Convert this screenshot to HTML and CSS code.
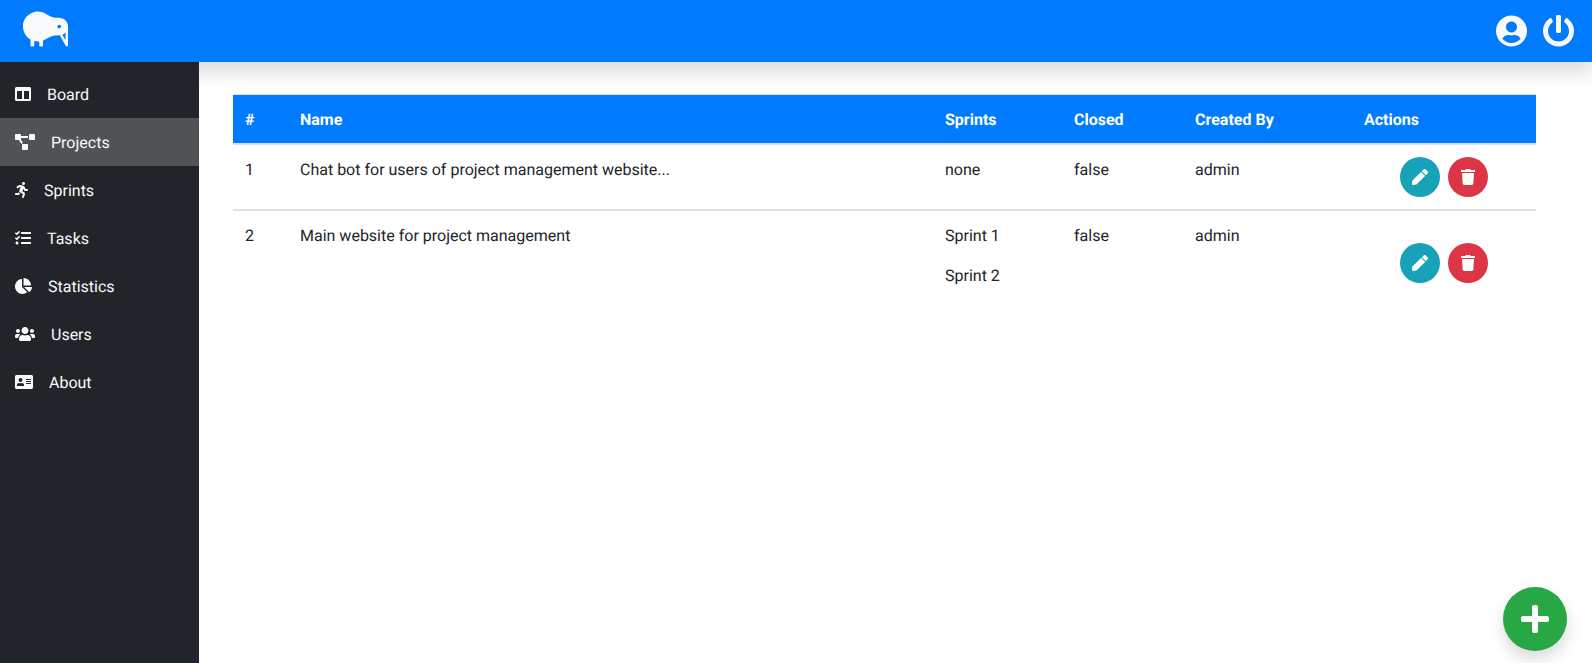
FILE: index.html
```html
<!DOCTYPE html>
<html lang="en">
<head>
    <meta charset="UTF-8">
    <meta name="viewport" content="width=device-width, initial-scale=1.0">
    <title>Projects</title>
    <link rel="stylesheet" href="styles.css">
</head>
<body>

    <!-- Top bar -->
    <header class="navbar">
        <svg class="logo" viewBox="0 0 576 512"><path d="M575.81 217.98C572.64 157.41 518.28 112 457.63 112h-9.37c-52.82 0-104.25-16.25-147.74-46.24-41.99-28.96-96.04-41.62-153.21-28.7C129.3 41.12-.08 78.24 0 224c.04 70.95 38.68 132.8 95.99 166.01V464c0 8.84 7.16 16 16 16h16c8.84 0 16-7.16 16-16v-54.26c15.36 3.96 31.4 6.26 48 6.26 5.44 0 10.68-.73 16-1.18V464c0 8.84 7.16 16 16 16h16c8.84 0 16-7.16 16-16v-59.43c14.24-5.06 27.88-11.39 40.34-19.51C342.07 355.25 393.86 336 448.46 336c25.48 0 16.01-.31 23.05-.78l74.41 136.44c2.86 5.23 8.3 8.34 14.05 8.34 1.31 0 2.64-.16 3.95-.5 7.09-1.8 12.05-8.19 12.05-15.5 0 0 .14-240.24-.16-246.02zM463.97 248c-13.25 0-24-10.75-24-24 0-13.26 10.75-24 24-24s24 10.74 24 24c0 13.25-10.75 24-24 24zm80 153.25l-39.86-73.08c15.12-5.83 28.73-14.6 39.86-25.98v99.06z"/></svg>
        <div class="navbar-right">
            <svg class="nav-icon" viewBox="0 0 496 512"><path d="M248 8C111 8 0 119 0 256s111 248 248 248 248-111 248-248S385 8 248 8zm0 96c48.6 0 88 39.4 88 88s-39.4 88-88 88-88-39.4-88-88 39.4-88 88-88zm0 344c-58.7 0-111.3-26.6-146.5-68.2 18.8-35.4 55.6-59.8 98.5-59.8 2.4 0 4.8.4 7.1 1.1 13 4.2 26.6 6.9 40.9 6.9 14.3 0 28-2.7 40.9-6.9 2.3-.7 4.7-1.1 7.1-1.1 42.9 0 79.7 24.4 98.5 59.8C359.3 421.4 306.7 448 248 448z"/></svg>
            <svg class="nav-icon" viewBox="8 0 496 512"><path d="M400 54.1c63 45 104 118.6 104 201.9 0 136.8-110.8 247.7-247.5 248C120 504.3 8.2 393 8 256.4 7.9 173.1 48.9 99.3 111.8 54.2c11.7-8.3 28-4.8 35 7.7L162.6 90c5.9 10.5 3.1 23.8-6.6 31-41.5 30.8-68 79.6-68 134.9-.1 92.3 74.5 168.1 168 168.1 91.6 0 168.6-74.2 168-169.1-.3-51.8-24.7-101.8-68.1-134-9.7-7.2-12.4-20.5-6.5-30.9l15.8-28.1c7-12.4 23.2-16.1 34.8-7.8zM296 264V24c0-13.3-10.7-24-24-24h-32c-13.3 0-24 10.7-24 24v240c0 13.3 10.7 24 24 24h32c13.3 0 24-10.7 24-24z"/></svg>
        </div>
    </header>

    <div class="layout">
        <!-- Side menu -->
        <nav class="sidebar">
            <a class="side-link">
                <svg class="side-icon" viewBox="0 0 512 512"><path d="M464 32H48C21.49 32 0 53.49 0 80v352c0 26.51 21.49 48 48 48h416c26.51 0 48-21.49 48-48V80c0-26.51-21.49-48-48-48zM224 416H64V160h160v256zm224 0H288V160h160v256z"/></svg>
                <span class="side-label">Board</span>
            </a>
            <a class="side-link active">
                <svg class="side-icon" viewBox="0 0 640 512"><path d="M384 320H256c-17.67 0-32 14.33-32 32v128c0 17.67 14.33 32 32 32h128c17.67 0 32-14.33 32-32V352c0-17.67-14.33-32-32-32zM192 32c0-17.67-14.33-32-32-32H32C14.33 0 0 14.33 0 32v128c0 17.67 14.33 32 32 32h95.72l73.16 128.04C211.98 300.98 232.4 288 256 288h.28L192 175.51V128h224V64H192V32zM608 0H480c-17.67 0-32 14.33-32 32v128c0 17.67 14.33 32 32 32h128c17.67 0 32-14.33 32-32V32c0-17.67-14.33-32-32-32z"/></svg>
                <span class="side-label">Projects</span>
            </a>
            <a class="side-link">
                <svg class="side-icon" viewBox="0 0 416 512"><path d="M272 96c26.51 0 48-21.49 48-48S298.51 0 272 0s-48 21.49-48 48 21.49 48 48 48zM113.69 317.47l-14.8 34.52H32c-17.67 0-32 14.33-32 32s14.33 32 32 32h77.45c19.25 0 36.58-11.44 44.11-29.09l8.79-20.52-10.67-6.3c-17.32-10.23-30.06-25.37-37.99-42.61zM384 223.99h-44.03l-26.06-53.25c-12.5-25.55-35.45-44.23-61.78-50.94l-71.08-21.14c-28.3-6.8-57.77-.55-80.84 17.14l-39.67 30.41c-14.03 10.75-16.69 30.83-5.92 44.86s30.84 16.66 44.86 5.92l39.69-30.41c7.67-5.89 17.44-8 25.27-6.14l14.7 4.37-37.46 87.39c-12.62 29.48-1.31 64.01 26.3 80.31l84.98 50.17-27.47 87.73c-5.28 16.86 4.11 34.81 20.97 40.09 3.19 1 6.41 1.48 9.58 1.48 13.61 0 26.23-8.77 30.52-22.45l31.64-101.06c5.91-20.77-2.89-43.08-21.64-54.39l-61.24-36.14 31.31-78.28 20.27 41.43c8 16.34 24.92 26.89 43.11 26.89H384c17.67 0 32-14.33 32-32s-14.33-31.99-32-31.99z"/></svg>
                <span class="side-label">Sprints</span>
            </a>
            <a class="side-link">
                <svg class="side-icon" viewBox="0 0 512 512"><path d="M139.61 35.5a12 12 0 0 0-17 0L58.93 98.81l-22.7-22.12a12 12 0 0 0-17 0L3.53 92.41a12 12 0 0 0 0 17l47.59 47.4a12.78 12.78 0 0 0 17.61 0l15.59-15.62L156.52 69a12.09 12.09 0 0 0 .09-17zm0 159.19a12 12 0 0 0-17 0l-63.68 63.72-22.7-22.1a12 12 0 0 0-17 0L3.53 252a12 12 0 0 0 0 17L51 316.5a12.77 12.77 0 0 0 17.6 0l15.7-15.69 72.2-72.22a12 12 0 0 0 .09-16.9zM64 368c-26.49 0-48.59 21.5-48.59 48S37.53 464 64 464a48 48 0 0 0 0-96zm432 16H208a16 16 0 0 0-16 16v32a16 16 0 0 0 16 16h288a16 16 0 0 0 16-16v-32a16 16 0 0 0-16-16zm0-320H208a16 16 0 0 0-16 16v32a16 16 0 0 0 16 16h288a16 16 0 0 0 16-16V80a16 16 0 0 0-16-16zm0 160H208a16 16 0 0 0-16 16v32a16 16 0 0 0 16 16h288a16 16 0 0 0 16-16v-32a16 16 0 0 0-16-16z"/></svg>
                <span class="side-label">Tasks</span>
            </a>
            <a class="side-link">
                <svg class="side-icon" viewBox="0 0 544 512"><path d="M527.79 288H290.5l158.03 158.03c6.04 6.04 15.98 6.53 22.19.68 38.7-36.46 65.32-85.61 73.13-140.86 1.34-9.46-6.51-17.85-16.06-17.85zm-15.83-64.8C503.72 103.74 408.26 8.28 288.8.04 279.68-.59 272 7.1 272 16.24V240h223.77c9.14 0 16.82-7.68 16.19-16.8zM224 288V50.71c0-9.55-8.39-17.4-17.84-16.06C86.99 51.49-4.1 155.6.14 280.37 4.5 408.51 114.83 513.59 243.03 511.98c50.4-.63 96.97-16.87 135.26-44.03 7.9-5.6 8.42-17.23 1.57-24.08L224 288z"/></svg>
                <span class="side-label">Statistics</span>
            </a>
            <a class="side-link">
                <svg class="side-icon" viewBox="0 0 640 512"><path d="M96 224c35.3 0 64-28.7 64-64s-28.7-64-64-64-64 28.7-64 64 28.7 64 64 64zm448 0c35.3 0 64-28.7 64-64s-28.7-64-64-64-64 28.7-64 64 28.7 64 64 64zm32 32h-64c-17.6 0-33.5 7.1-45.1 18.6 40.3 22.1 68.9 62 75.1 109.4h66c17.7 0 32-14.3 32-32v-32c0-35.3-28.7-64-64-64zm-256 0c61.9 0 112-50.1 112-112S381.9 32 320 32 208 82.1 208 144s50.1 112 112 112zm76.8 32h-8.3c-20.8 10-43.9 16-68.5 16s-47.6-6-68.5-16h-8.3C179.6 288 128 339.6 128 403.2V432c0 26.5 21.5 48 48 48h288c26.5 0 48-21.5 48-48v-28.8c0-63.6-51.6-115.2-115.2-115.2zm-223.7-13.4C161.5 263.1 145.6 256 128 256H64c-35.3 0-64 28.7-64 64v32c0 17.7 14.3 32 32 32h65.9c6.3-47.4 34.9-87.3 75.2-109.4z"/></svg>
                <span class="side-label">Users</span>
            </a>
            <a class="side-link">
                <svg class="side-icon" viewBox="0 0 576 512"><path d="M528 32H48C21.5 32 0 53.5 0 80v352c0 26.5 21.5 48 48 48h480c26.5 0 48-21.5 48-48V80c0-26.5-21.5-48-48-48zm-352 96c35.3 0 64 28.7 64 64s-28.7 64-64 64-64-28.7-64-64 28.7-64 64-64zm112 236.8c0 10.6-10 19.2-22.4 19.2H86.4C74 384 64 375.4 64 364.8v-19.2c0-31.8 30.1-57.6 67.2-57.6h5c12.3 5.1 25.7 8 39.8 8s27.6-2.9 39.8-8h5c37.1 0 67.2 25.8 67.2 57.6v19.2zM512 312c0 4.4-3.6 8-8 8H360c-4.4 0-8-3.6-8-8v-16c0-4.4 3.6-8 8-8h144c4.4 0 8 3.6 8 8v16zm0-64c0 4.4-3.6 8-8 8H360c-4.4 0-8-3.6-8-8v-16c0-4.4 3.6-8 8-8h144c4.4 0 8 3.6 8 8v16zm0-64c0 4.4-3.6 8-8 8H360c-4.4 0-8-3.6-8-8v-16c0-4.4 3.6-8 8-8h144c4.4 0 8 3.6 8 8v16z"/></svg>
                <span class="side-label">About</span>
            </a>
        </nav>

        <!-- Projects table -->
        <main class="content">
            <table class="projects-table">
                <colgroup>
                    <col class="col-num">
                    <col class="col-name">
                    <col class="col-sprints">
                    <col class="col-closed">
                    <col class="col-author">
                    <col class="col-actions">
                </colgroup>
                <thead>
                    <tr>
                        <th>#</th>
                        <th>Name</th>
                        <th>Sprints</th>
                        <th>Closed</th>
                        <th>Created By</th>
                        <th>Actions</th>
                    </tr>
                </thead>
                <tbody>
                    <tr>
                        <td>1</td>
                        <td>Chat bot for users of project management website...</td>
                        <td><p class="sprint none">none</p></td>
                        <td>false</td>
                        <td>admin</td>
                        <td class="actions">
                            <button class="round-btn edit">
                                <svg class="btn-icon" viewBox="0 0 512 512"><path d="M290.74 93.24l128.02 128.02-277.99 277.99-114.14 12.6C11.35 513.54-1.56 500.62.14 485.34l12.7-114.22 277.9-277.88zm207.2-19.06l-60.11-60.11c-18.75-18.75-49.16-18.75-67.91 0l-56.55 56.55 128.02 128.02 56.55-56.55c18.75-18.76 18.75-49.16 0-67.91z"/></svg>
                            </button>
                            <button class="round-btn delete">
                                <svg class="btn-icon" viewBox="0 0 448 512"><path d="M432 32H312l-9.4-18.7A24 24 0 0 0 281.1 0H166.8a23.72 23.72 0 0 0-21.4 13.3L136 32H16A16 16 0 0 0 0 48v32a16 16 0 0 0 16 16h416a16 16 0 0 0 16-16V48a16 16 0 0 0-16-16zM53.2 467a48 48 0 0 0 47.9 45h245.8a48 48 0 0 0 47.9-45L416 128H32z"/></svg>
                            </button>
                        </td>
                    </tr>
                    <tr>
                        <td>2</td>
                        <td>Main website for project management</td>
                        <td>
                            <p class="sprint">Sprint 1</p>
                            <p class="sprint">Sprint 2</p>
                        </td>
                        <td>false</td>
                        <td>admin</td>
                        <td class="actions">
                            <button class="round-btn edit">
                                <svg class="btn-icon" viewBox="0 0 512 512"><path d="M290.74 93.24l128.02 128.02-277.99 277.99-114.14 12.6C11.35 513.54-1.56 500.62.14 485.34l12.7-114.22 277.9-277.88zm207.2-19.06l-60.11-60.11c-18.75-18.75-49.16-18.75-67.91 0l-56.55 56.55 128.02 128.02 56.55-56.55c18.75-18.76 18.75-49.16 0-67.91z"/></svg>
                            </button>
                            <button class="round-btn delete">
                                <svg class="btn-icon" viewBox="0 0 448 512"><path d="M432 32H312l-9.4-18.7A24 24 0 0 0 281.1 0H166.8a23.72 23.72 0 0 0-21.4 13.3L136 32H16A16 16 0 0 0 0 48v32a16 16 0 0 0 16 16h416a16 16 0 0 0 16-16V48a16 16 0 0 0-16-16zM53.2 467a48 48 0 0 0 47.9 45h245.8a48 48 0 0 0 47.9-45L416 128H32z"/></svg>
                            </button>
                        </td>
                    </tr>
                </tbody>
            </table>
        </main>
    </div>

    <!-- Add project button -->
    <button class="fab">
        <svg class="fab-icon" viewBox="0 0 448 512"><path d="M416 208H272V64c0-17.67-14.33-32-32-32h-32c-17.67 0-32 14.33-32 32v144H32c-17.67 0-32 14.33-32 32v32c0 17.67 14.33 32 32 32h144v144c0 17.67 14.33 32 32 32h32c17.67 0 32-14.33 32-32V304h144c17.67 0 32-14.33 32-32v-32c0-17.67-14.33-32-32-32z"/></svg>
    </button>

</body>
</html>
```

FILE: styles.css
```css
html, body {
    height: 100%;
}
body {
    margin: 0;
    display: flex;
    flex-direction: column;
    overflow: hidden;
    font-family: Roboto, "Liberation Sans", sans-serif;
    font-size: 16px;
    line-height: 24px;
    color: #212529;
    background-color: #fff;
    text-rendering: geometricPrecision;
}
.navbar {
    position: relative;
    z-index: 1;
    flex: none;
    height: 62px;
    display: flex;
    align-items: center;
    justify-content: space-between;
    padding: 0 18px 0 23px;
    background-color: #007bff;
    box-shadow: 0 10px 20px rgba(0, 0, 0, .15);
}
.logo {
    height: 40px;
    width: 45px;
    margin-top: -5px;
    fill: #f8f9fa;
}
.navbar-right {
    display: flex;
    gap: 16px;
}
.nav-icon {
    height: 32px;
    width: 31px;
    fill: #f8f9fa;
}
.layout {
    flex: 1;
    display: flex;
    min-height: 0;
}
.sidebar {
    position: relative;
    z-index: 2;
    flex: none;
    width: 199px;
    padding-top: 8px;
    background-color: #212529;
}
.side-link {
    height: 48px;
    display: flex;
    align-items: center;
    gap: 16px;
    padding-left: 15px;
    color: #f8f9fa;
}
.side-link.active {
    background-color: #4f5356;
}
.side-label {
    padding-top: 2px;
}
.side-icon {
    height: 16px;
    width: auto;
    fill: #f8f9fa;
}
.content {
    flex: 1;
    padding: 32px 56px 0 34px;
}
.projects-table {
    width: 100%;
    table-layout: fixed;
    border-collapse: separate;
    border-spacing: 0;
}
.col-num { width: 55px; }
.col-name { width: 645px; }
.col-sprints { width: 129px; }
.col-closed { width: 121px; }
.col-author { width: 169px; }
.col-actions { width: 184px; }
.projects-table th {
    padding: 13px 12px 11px;
    text-align: left;
    color: #fff;
    font-weight: 700;
    background-color: #007bff;
    border-top: 1px solid #dee2e6;
    border-bottom: 2px solid #dee2e6;
}
.projects-table td {
    padding: 13px 12px 11px;
    vertical-align: top;
}
.projects-table tbody tr:first-child td {
    border-bottom: 2px solid #dee2e6;
}
.sprint {
    margin: 0 0 16px;
}
.sprint.none {
    margin: 0;
}
.projects-table td.actions {
    padding: 12px;
    vertical-align: middle;
    text-align: center;
}
.round-btn {
    width: 40px;
    height: 40px;
    margin: 0 2px;
    padding: 0;
    border: none;
    border-radius: 50%;
    cursor: pointer;
    vertical-align: middle;
}
.round-btn.edit {
    background-color: #17a2b8;
}
.round-btn.delete {
    background-color: #dc3545;
}
.btn-icon {
    display: block;
    height: 16px;
    width: auto;
    margin: 0 auto;
    fill: #fff;
}
.fab {
    position: fixed;
    right: 25px;
    bottom: 12px;
    z-index: 3;
    width: 64px;
    height: 64px;
    display: flex;
    align-items: center;
    justify-content: center;
    padding: 0;
    border: none;
    border-radius: 50%;
    background-color: #28a745;
    box-shadow: 0 8px 16px rgba(0, 0, 0, .15);
    cursor: pointer;
}
.fab-icon {
    height: 32px;
    width: 28px;
    fill: #fff;
}
```
